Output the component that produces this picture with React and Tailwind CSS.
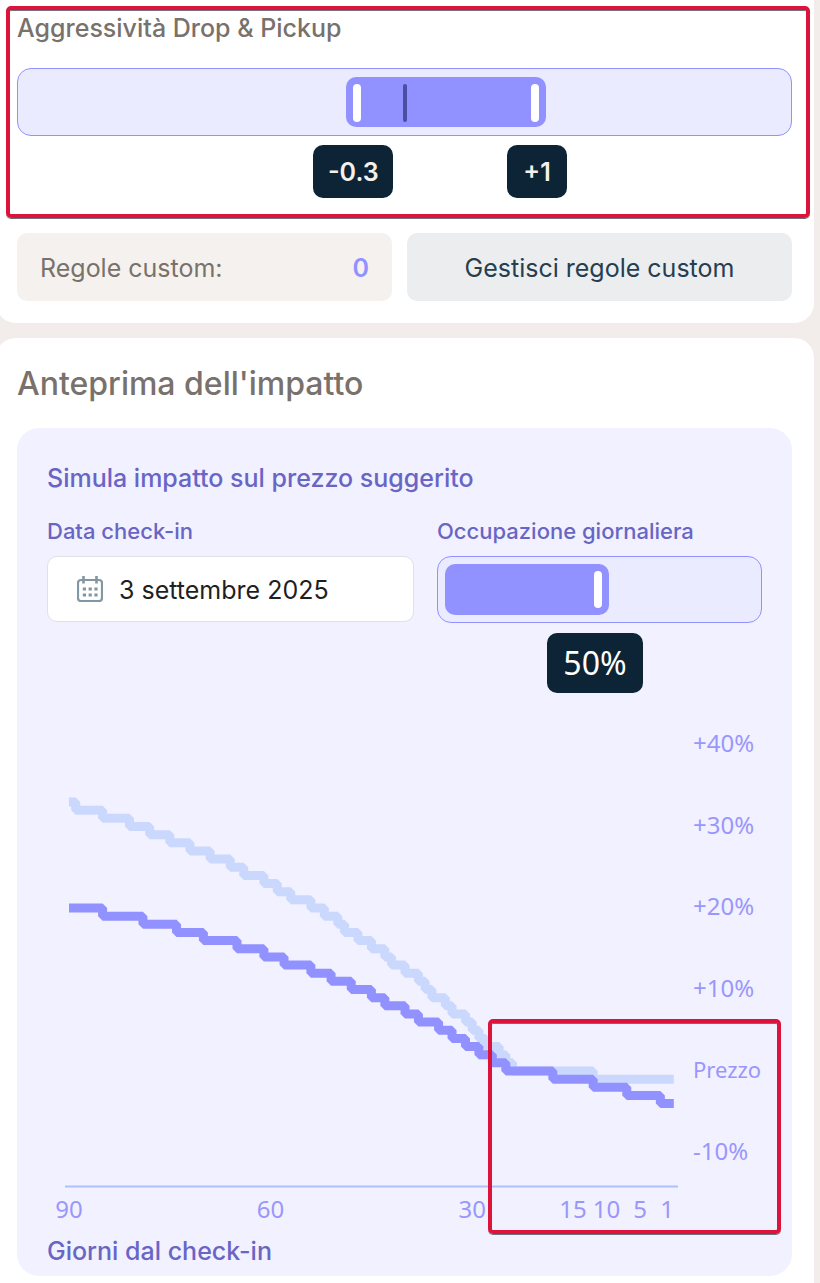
import { useState } from 'react';

const ORIGIN_X = 22;
const DAY_WIDTH = 6.72;
const ZERO_Y = 358;
const PERCENT_HEIGHT = 8.15;

// each entry is a day offset (from 90 days out) where the price drops by 1%
const baseline = {
  start: 33,
  drops: [
    1, 5, 9, 12, 15, 18, 21, 24, 26, 29, 31, 33, 36, 38, 40, 41, 43, 45, 47, 48, 50, 52, 53, 54,
    56, 57, 59, 60, 61, 62, 64, 65, 66, 78,
  ],
};
const simulated = {
  start: 20,
  drops: [5, 11, 16, 20, 25, 29, 32, 36, 39, 42, 45, 47, 50, 52, 55, 57, 59, 61, 63, 65, 72, 78, 83, 88],
};

const yLabels = [
  { text: '+40%', value: 40 },
  { text: '+30%', value: 30 },
  { text: '+20%', value: 20 },
  { text: '+10%', value: 10 },
  { text: 'Prezzo', value: 0 },
  { text: '-10%', value: -10 },
];
const xLabels = [90, 60, 30, 15, 10, 5, 1];

const dayX = (offset) => ORIGIN_X + offset * DAY_WIDTH;
const percentY = (value) => ZERO_Y - value * PERCENT_HEIGHT;

const stepPath = ({ start, drops }) => {
  let level = start;
  let d = `M${dayX(0)} ${percentY(level)}`;
  drops.forEach((offset) => {
    level -= 1;
    d += `H${dayX(offset)}V${percentY(level)}`;
  });
  return `${d}H${dayX(90)}`;
};

const Highlight = ({ className }) => (
  <div
    className={`absolute pointer-events-none rounded-[5px] border-4 border-[#dc143c] shadow-[0_1px_0_#6b7280,inset_0_1px_0_#6b7280] ${className}`}
  />
);

const Tooltip = ({ left, className, children }) => (
  <output
    className={`absolute top-0 -translate-x-1/2 flex items-center justify-center rounded-[10px] bg-[#0d2436] ${className}`}
    style={{ left: `${left}%` }}
  >
    {children}
  </output>
);

const CalendarIcon = () => (
  <svg viewBox="0 0 26 26" className="w-[26px] h-[26px] shrink-0" fill="none" aria-hidden="true">
    <rect x="1" y="4" width="24" height="21" rx="3" stroke="#8296a3" strokeWidth="2.2" />
    <path d="M6.5 0v7.5M19.5 0v7.5" stroke="#8296a3" strokeWidth="2.6" />
    <path d="M5.8 13h14.8M5.8 19h14.8" stroke="#8296a3" strokeWidth="3.2" strokeDasharray="3.2 2.6" />
  </svg>
);

const RangeSlider = () => {
  const [low, setLow] = useState(-0.3);
  const [high, setHigh] = useState(1);
  const start = 43.4 + (low + 0.3) * 14;
  const end = 67.1 + (high - 1) * 14;
  return (
    <div role="group" aria-labelledby="aggressivita">
      <div className="relative h-[68px] rounded-[14px] border border-[#9191ff] bg-[#eaebff]">
        <div
          className="absolute inset-y-2 flex justify-between rounded-[10px] bg-[#9191ff] px-[7px] pt-[7px] pb-[5px]"
          style={{ left: `${start - 1}%`, right: `${98.8 - end}%` }}
        >
          <span className="w-2 rounded-full bg-white" />
          <span className="w-2 rounded-full bg-white" />
        </div>
        <span className="absolute left-1/2 top-[15px] bottom-[13px] w-1 -translate-x-1/2 rounded-full bg-[#4d4da3]" />
        <input
          type="range"
          aria-label="Drop"
          min="-3"
          max="0"
          step="0.1"
          value={low}
          onChange={(e) => setLow(Number(e.target.value))}
          className="absolute inset-y-0 left-0 w-1/2 opacity-0"
        />
        <input
          type="range"
          aria-label="Pickup"
          min="0"
          max="3"
          step="0.1"
          value={high}
          onChange={(e) => setHigh(Number(e.target.value))}
          className="absolute inset-y-0 right-0 w-1/2 opacity-0"
        />
      </div>
      <div className="relative mt-[9px] h-[53px] text-[25px] font-semibold text-[#f5f0eb]">
        <Tooltip left={start} className="h-full w-20 pt-0.5">{low}</Tooltip>
        <Tooltip left={end} className="h-full w-[60px] pt-0.5">+{high}</Tooltip>
      </div>
    </div>
  );
};

const OccupancySlider = () => {
  const [value, setValue] = useState(50);
  return (
    <div className="min-w-0">
      <label htmlFor="occupazione" className="block text-[22px] leading-[30px] font-medium text-[#6865c5]">
        Occupazione giornaliera
      </label>
      <div className="relative mt-[10px] h-[67px] rounded-[14px] border border-[#9191ff] bg-[#eaebff] p-[7px]">
        <div
          className="flex h-full justify-end rounded-[10px] bg-[#9191ff] p-[7px]"
          style={{ width: `${value * 0.94 + 6}%` }}
        >
          <span className="w-2 rounded-full bg-white" />
        </div>
        <input
          id="occupazione"
          type="range"
          min="0"
          max="100"
          value={value}
          onChange={(e) => setValue(Number(e.target.value))}
          className="absolute inset-0 w-full opacity-0"
        />
      </div>
      <div className="relative mt-[10px] h-[60px] font-['Noto_Sans',sans-serif] text-[32px] text-white">
        <Tooltip left={value * 0.96 + 0.6} className="h-full w-24">{value}%</Tooltip>
      </div>
    </div>
  );
};

const ImpactChart = () => (
  <div className="relative mt-5">
    <svg
      viewBox="0 0 715 520"
      className="block w-full h-auto overflow-visible font-['Noto_Sans',sans-serif] text-2xl"
      role="img"
      aria-label="Anteprima dell'impatto"
    >
      <g fill="none" strokeWidth="9" strokeLinejoin="bevel">
        <path d={stepPath(baseline)} stroke="#cbd8fd" />
        <path d={stepPath(simulated)} stroke="#9191ff" />
      </g>
      <path d="M18 473.5H631" stroke="#adc2fb" strokeWidth="2" />
      <g fill="#9a97fb">
        {yLabels.map(({ text, value }) => (
          <text key={text} x="646" y={percentY(value) + 7} className={value === 0 ? 'text-[22px]' : 'text-2xl'}>
            {text}
          </text>
        ))}
        {xLabels.map((day) => (
          <text key={day} x={day === 1 ? 620 : dayX(90 - day)} y="505" textAnchor="middle">{day}</text>
        ))}
      </g>
    </svg>
    <Highlight className="left-[441px] -right-[19px] top-[306px] h-[215px]" />
  </div>
);

const App = () => (
  <main className="min-h-screen overflow-hidden bg-[#f2edea] pr-[6px] font-[Inter,sans-serif]">
    <section className="relative -ml-1 rounded-b-[20px] bg-white pt-3 pr-[22px] pb-[22px] pl-[21px]">
      <h2 id="aggressivita" className="mb-6 text-[25px] leading-8 font-medium text-[#78716c]">
        Aggressività Drop &amp; Pickup
      </h2>
      <RangeSlider />
      <div className="mt-[35px] grid grid-cols-[375fr_385fr] gap-[15px] text-[25px]">
        <div className="flex h-[68px] items-center justify-between rounded-[10px] bg-[#f5f1ee] px-[23px] pt-1 text-[#78716c]">
          <span>Regole custom:</span>
          <span className="font-semibold text-[#9191ff]">0</span>
        </div>
        <button type="button" className="h-[68px] rounded-[10px] bg-[#ecedef] pt-1 text-[#263e50]">
          Gestisci regole custom
        </button>
      </div>
      <Highlight className="left-[10px] right-1 top-[6px] h-[212px]" />
    </section>

    <section className="-ml-1 mt-[15px] rounded-t-[20px] bg-white pt-[26px] pr-[22px] pb-[7px] pl-[21px]">
      <h1 className="mb-6 text-[32px] leading-10 font-medium text-[#78716c]">Anteprima dell'impatto</h1>
      <div className="rounded-[22px] bg-[#f1f1ff] px-[30px] pt-[30px] pb-[7px]">
        <h2 className="mb-[18px] text-[25px] leading-10 font-medium text-[#6865c5]">
          Simula impatto sul prezzo suggerito
        </h2>
        <div className="grid grid-cols-[367fr_325fr] gap-[23px]">
          <div className="min-w-0">
            <label htmlFor="data" className="block text-[22px] leading-[30px] font-medium text-[#6865c5]">
              Data check-in
            </label>
            <div className="mt-[10px] flex h-[66px] items-center gap-4 rounded-[10px] border border-[#dfe1e8] bg-white px-[29px]">
              <CalendarIcon />
              <input
                id="data"
                type="text"
                defaultValue="3 settembre 2025"
                className="min-w-0 flex-1 pt-1 text-[25px] text-[#1f1f1f] outline-none"
              />
            </div>
          </div>
          <OccupancySlider />
        </div>
        <ImpactChart />
        <p className="text-[25px] leading-9 font-medium text-[#6865c5]">Giorni dal check-in</p>
      </div>
    </section>
  </main>
);

export default App;
